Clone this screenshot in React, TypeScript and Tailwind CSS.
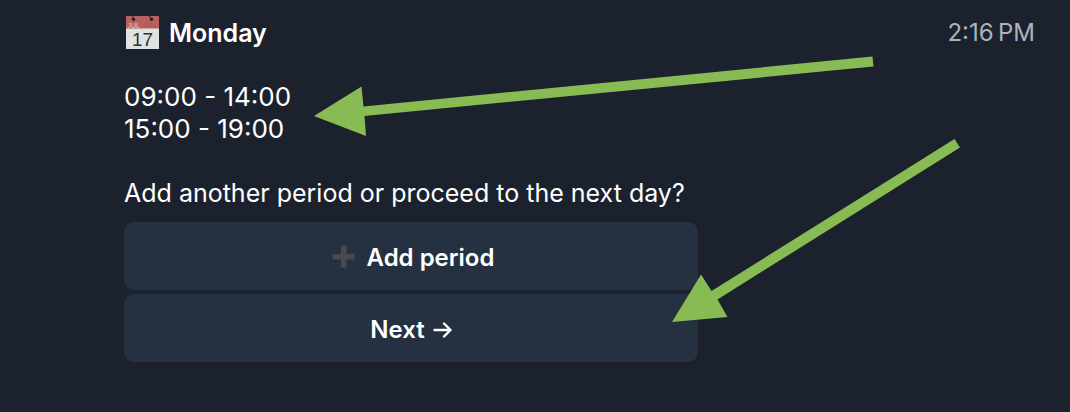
import type { ReactNode } from "react";
import { clsx } from "clsx";

type Period = { from: string; to: string };

const PERIODS: Period[] = [
  { from: "09:00", to: "14:00" },
  { from: "15:00", to: "19:00" },
];

function CalendarIcon() {
  return (
    <svg viewBox="0 0 33 33" className="size-[33px] shrink-0" aria-hidden="true">
      <rect width="33" height="33" fill="#dfe3e2" />
      <rect width="33" height="12.5" fill="#b5625f" />
      <path d="M6.500 0 7.500 3M23 0 25.500 3" stroke="#3a2428" strokeWidth="1" />
      <circle cx="7.5" cy="3.2" r="1.7" fill="#2c2024" />
      <circle cx="25.5" cy="3.2" r="1.7" fill="#2c2024" />
      <path d="M19 8h11M19 10.500h11" stroke="#a85450" strokeWidth="1" strokeDasharray="1.5 1" />
      <text
        x="1.5"
        y="11.5"
        fontSize="7"
        className="font-['Liberation_Sans',sans-serif] font-normal"
        fill="#eccbc8"
      >
        JUL
      </text>
      <text
        x="16.5"
        y="29.5"
        fontSize="19"
        textAnchor="middle"
        className="font-['Liberation_Sans',sans-serif] font-normal"
        fill="#2f3134"
      >
        17
      </text>
    </svg>
  );
}

function PlusIcon() {
  return (
    <svg viewBox="0 0 23 23" className="mb-1 size-[23px] shrink-0" aria-hidden="true">
      <path d="M9 0.500h5.500v8.500h8v5.500h-8v8h-5.500v-8H0.500V9h8.500z" fill="#484a4b" />
    </svg>
  );
}

function ArrowRightIcon() {
  return (
    <svg viewBox="0 0 19 18" className="h-[18px] w-[19px] shrink-0" aria-hidden="true">
      <path
        d="M1.500 9h16M11 2.500 17.500 9 11 15.500"
        fill="none"
        stroke="currentColor"
        strokeWidth="2.4"
        strokeLinecap="round"
        strokeLinejoin="round"
      />
    </svg>
  );
}

function ReplyButton({ className, children }: { className?: string; children: ReactNode }) {
  return (
    <button
      type="button"
      className={clsx(
        "flex h-[68px] w-full items-center justify-center rounded-[10px] bg-[#253141] pt-1 text-2xl font-semibold",
        className
      )}
    >
      {children}
    </button>
  );
}

// Hand-drawn pointers laid over the message
function Annotations() {
  return (
    <svg
      viewBox="0 0 1070 412"
      className="pointer-events-none absolute top-0 left-0 h-[412px] w-[1070px]"
      fill="#88bb54"
      aria-hidden="true"
    >
      <path d="M314 116 361.500 86.500 363.500 106.500 872.500 56.500 873.500 66.500 364.500 116 366 136z" />
      <path d="M672 322 701 274.500 711.500 291 954.500 139 960 147.500 717.500 299.500 727.500 317z" />
    </svg>
  );
}

export default function App() {
  return (
    <main className="relative min-h-screen overflow-hidden bg-[#1c222d] pt-4 pr-[35px] pb-12 pl-[124px] font-['Inter',sans-serif] text-[25px] leading-8 text-white">
      <header className="flex items-center justify-between">
        <h1 className="flex items-center gap-2.5 pl-0.5 font-semibold">
          <CalendarIcon />
          Monday
        </h1>
        <time className="text-2xl leading-8 text-[#aab2bf]">2:16{"\u202f"}PM</time>
      </header>

      <section className="w-[574px] max-w-full">
        <ul className="mt-8 text-[26px] leading-8">
          {PERIODS.map(({ from, to }) => (
            <li key={from}>
              {from} - {to}
            </li>
          ))}
        </ul>
        <p className="mt-8 whitespace-nowrap">Add another period or proceed to the next day?</p>

        <div className="mt-[13px] flex flex-col gap-1">
          <ReplyButton className="gap-3 pl-1">
            <PlusIcon />
            Add period
          </ReplyButton>
          <ReplyButton className="gap-2">
            Next
            <ArrowRightIcon />
          </ReplyButton>
        </div>
      </section>

      <Annotations />
    </main>
  );
}
